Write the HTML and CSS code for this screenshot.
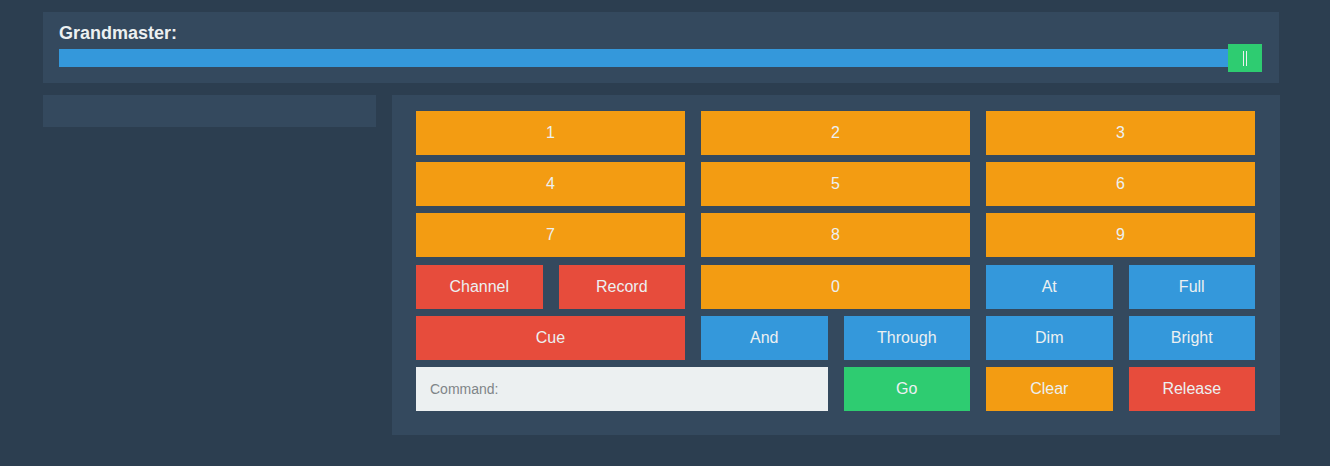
FILE: index.html
```html
<!DOCTYPE html>
<html>
<head>
<meta charset="utf-8">
<link rel="stylesheet" href="styles.css">
</head>
<body>
<div class="page">
  <section class="master">
    <div class="master-title">Grandmaster:</div>
    <div class="slider">
      <div class="track"></div>
      <div class="handle"><span class="grip"></span></div>
    </div>
  </section>
  <div class="content">
    <aside class="sidebar"></aside>
    <main class="console">
      <div class="pad">
        <button class="btn orange span2">1</button>
        <button class="btn orange span2">2</button>
        <button class="btn orange span2">3</button>
        <button class="btn orange span2">4</button>
        <button class="btn orange span2">5</button>
        <button class="btn orange span2">6</button>
        <button class="btn orange span2">7</button>
        <button class="btn orange span2">8</button>
        <button class="btn orange span2">9</button>
        <button class="btn red">Channel</button>
        <button class="btn red">Record</button>
        <button class="btn orange span2">0</button>
        <button class="btn blue">At</button>
        <button class="btn blue">Full</button>
        <button class="btn red span2">Cue</button>
        <button class="btn blue">And</button>
        <button class="btn blue">Through</button>
        <button class="btn blue">Dim</button>
        <button class="btn blue">Bright</button>
        <input class="command span3" type="text" placeholder="Command:">
        <button class="btn green">Go</button>
        <button class="btn orange">Clear</button>
        <button class="btn red">Release</button>
      </div>
    </main>
  </div>
</div>
</body>
</html>
```

FILE: styles.css
```css
html, body {
  margin: 0;
  padding: 0;
}
body {
  background: #2c3e50;
  font-family: "Liberation Sans", Arial, sans-serif;
  color: #ecf0f1;
}
.page {
  width: 1237px;
  margin-left: 43px;
  padding-top: 12px;
}
.master {
  background: #34495e;
  padding: 11px 16px 11px 16px;
  margin-right: 1px;
}
.master-title {
  font-size: 18px;
  font-weight: bold;
  line-height: 21px;
  color: #ecf0f1;
}
.slider {
  position: relative;
  height: 28px;
  display: flex;
  align-items: center;
}
.track {
  flex: 1;
  height: 18px;
  margin-right: 1px;
  background: #3498db;
}
.handle {
  position: absolute;
  right: 1px;
  top: 0;
  width: 34px;
  height: 28px;
  background: #2ecc71;
  display: flex;
  align-items: center;
  justify-content: center;
}
.grip {
  width: 2px;
  height: 15px;
  border-left: 1px solid #ecf0f1;
  border-right: 1px solid #ecf0f1;
}
.content {
  display: flex;
  gap: 16px;
  margin-top: 12px;
  align-items: flex-start;
}
.sidebar {
  width: 333px;
  height: 32px;
  background: #34495e;
}
.console {
  width: 888px;
  background: #34495e;
  padding: 16px 25px 24px 24px;
  box-sizing: border-box;
}
.pad {
  display: grid;
  grid-template-columns: repeat(6, 1fr);
  grid-auto-rows: 44px;
  gap: 7.2px 16px;
}
.btn {
  border: none;
  border-radius: 0;
  margin: 0;
  padding: 0;
  font-family: "Liberation Sans", Arial, sans-serif;
  font-size: 16px;
  color: #ecf0f1;
  cursor: pointer;
}
.span2 { grid-column: span 2; }
.span3 { grid-column: span 3; }
.orange { background: #f39c12; }
.red { background: #e74c3c; }
.blue { background: #3498db; }
.green { background: #2ecc71; }
.command {
  border: none;
  border-radius: 0;
  margin: 0;
  background: #ecf0f1;
  padding: 0 14px;
  font-family: "Liberation Sans", Arial, sans-serif;
  font-size: 14px;
  color: #34495e;
  outline: none;
  min-width: 0;
}
.command::placeholder {
  color: #7f8588;
}
```
